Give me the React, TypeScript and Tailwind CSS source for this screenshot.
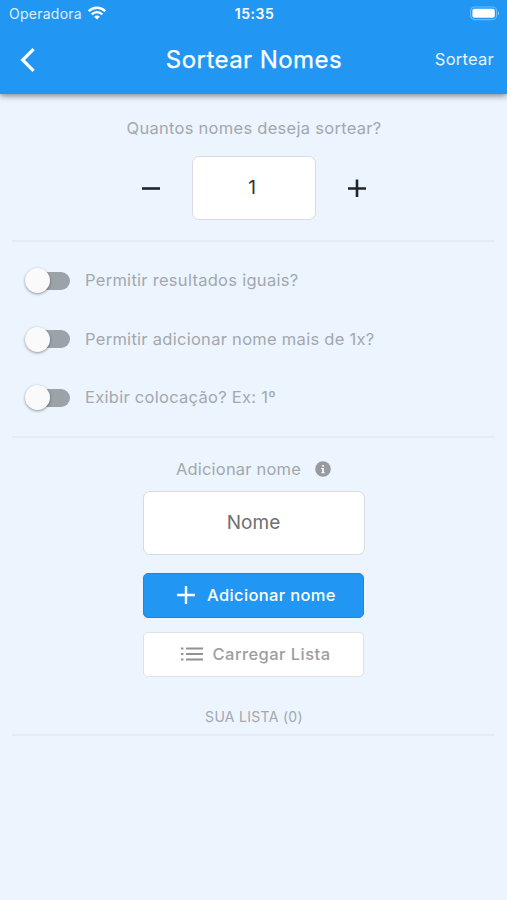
import { useState } from 'react';

const OPTIONS = [
  'Permitir resultados iguais?',
  'Permitir adicionar nome mais de 1x?',
  'Exibir colocação? Ex: 1º',
];

function StatusBar() {
  return (
    <div className="grid h-7 grid-cols-3 items-center pl-[9px] pr-[7px]">
      <div className="flex items-center gap-[6px] pb-[2px]">
        <span className="text-[14px] tracking-[0.25px] text-white/85">Operadora</span>
        <svg width="18" height="14" viewBox="0 0 18 14" fill="none" stroke="#fff">
          <path d="M0.8 5.2C5.4 0.6 12.6 0.6 17.2 5.2" strokeWidth="2.6" />
          <path d="M3.7 8.3C6.8 5.3 11.2 5.3 14.3 8.3" strokeWidth="2.3" />
          <path d="M9 13.6L6.1 10.7C7.8 9.1 10.2 9.1 11.9 10.7Z" fill="#fff" stroke="none" />
        </svg>
      </div>
      <span className="pb-[2px] text-center text-[14px] font-semibold tracking-[0.5px]">15:35</span>
      <svg width="31" height="15" viewBox="0 0 31 15" className="mb-[2px] justify-self-end">
        <rect x="1.6" y="1" width="26" height="12.6" rx="4" fill="none" stroke="#fff" strokeOpacity="0.35" strokeWidth="1.2" />
        <rect x="3.4" y="2.8" width="22.4" height="9" rx="2" fill="#fff" />
        <path d="M29 5.2c1.7.7 1.7 3.5 0 4.2z" fill="#fff" fillOpacity="0.4" />
      </svg>
    </div>
  );
}

function Toggle({ label }: { label: string }) {
  const [on, setOn] = useState(false);

  return (
    <div className="flex h-[58.5px] items-center gap-[15px]">
      <button
        role="switch"
        aria-checked={on}
        aria-label={label}
        onClick={() => setOn(!on)}
        className="flex h-[25px] w-[45px] items-center"
      >
        <span className={`ml-[3px] flex h-[18px] w-[42px] items-center rounded-full ${on ? 'justify-end bg-[#90caf9]' : 'bg-[#9ba2a8]'}`}>
          <span className="-ml-[3px] size-[25px] shrink-0 rounded-full bg-[#fafafa] shadow-[0_1px_3px_rgba(0,0,0,0.4)]" />
        </span>
      </button>
      <span className="text-[16.5px] tracking-[0.28px]">{label}</span>
    </div>
  );
}

export default function App() {
  const [count, setCount] = useState(1);

  return (
    <div className="min-h-[900px] w-full bg-[#ecf4fd] font-['Inter',sans-serif] text-[#a3a8ae]">
      {/* Header */}
      <header className="h-[94px] bg-[#2196f3] text-white shadow-[0_2px_6px_rgba(0,0,0,0.45)]">
        <StatusBar />
        <div className="grid h-16 grid-cols-[1fr_auto_1fr] items-center pl-5 pr-[13px]">
          <button aria-label="Voltar">
            <svg width="16" height="26" viewBox="0 0 16 26" fill="none" stroke="#fff" strokeWidth="3.2">
              <path d="M13.6 2.2L2.7 13L13.6 23.8" />
            </svg>
          </button>
          <h1 className="pr-[6px] text-[24px] tracking-[0.45px] [-webkit-text-stroke:0.25px_#fff]">Sortear Nomes</h1>
          <button className="justify-self-end pb-[2px] text-[16.5px] tracking-[0.25px] text-white/90">Sortear</button>
        </div>
      </header>

      <main className="px-3">
        {/* Quantity */}
        <section className="flex flex-col items-center border-b-2 border-[#e3ebf5] pb-5 pt-[22px]">
          <p className="pl-px text-[16.5px] leading-6 tracking-[0.28px]">Quantos nomes deseja sortear?</p>
          <div className="mt-4 flex items-center gap-8">
            <button aria-label="Diminuir" onClick={() => setCount(Math.max(1, count - 1))}>
              <svg width="18" height="18" viewBox="0 0 18 18" stroke="#20242a" strokeWidth="2.6">
                <path d="M0 9.5H18" />
              </svg>
            </button>
            <div className="flex h-16 w-[124px] items-center justify-center rounded-[7px] border border-[#d8dbe0] bg-white pr-[3px] text-[19px] text-[#333]">
              {count}
            </div>
            <button aria-label="Aumentar" onClick={() => setCount(count + 1)}>
              <svg width="18" height="18" viewBox="0 0 18 18" stroke="#20242a" strokeWidth="2.6">
                <path d="M0 9.5H18M9 0.5V18" />
              </svg>
            </button>
          </div>
        </section>

        {/* Options */}
        <section className="h-[196px] border-b-2 border-[#e3ebf5] pl-[13px] pt-[9.5px]">
          {OPTIONS.map((label) => (
            <Toggle key={label} label={label} />
          ))}
        </section>

        {/* Add name */}
        <section className="flex flex-col items-center border-b-2 border-[#e3ebf5] pb-[7px] pt-[19px]">
          <div className="flex h-6 items-center gap-[14px]">
            <span className="text-[16.5px] tracking-[0.2px]">Adicionar nome</span>
            <svg width="16" height="16" viewBox="0 0 16 16">
              <circle cx="8" cy="8" r="7.8" fill="#989a9d" />
              <path d="M7.1 3.9h1.9v1.9H7.1zM6.2 7h2.8v4.2h.9v1.1H6.2v-1.1h.9V8.1h-.9z" fill="#ecf4fd" />
            </svg>
          </div>
          <input
            placeholder="Nome"
            className="mt-[10px] h-16 w-[222px] rounded-[7px] border border-[#d8dbe0] bg-white pb-[2px] text-center text-[19px] text-[#333] outline-none placeholder:text-[#6f6f6f]"
          />
          <button className="mt-[18px] flex h-[45px] w-[221px] items-center justify-center gap-3 rounded-[5px] border border-[#1c87dd] bg-[#2196f3] pb-px pl-[6px] text-[16.5px] font-medium tracking-[0.35px] text-white">
            <svg width="18" height="18" viewBox="0 0 18 18" stroke="#fff" strokeWidth="2.4">
              <path d="M0 9H18M9 0V18" />
            </svg>
            Adicionar nome
          </button>
          <button className="mt-[14px] flex h-[45px] w-[221px] items-center justify-center gap-[10px] rounded-[5px] border border-[#dfe1e4] bg-white pb-px pl-[4px] text-[16.5px] font-medium tracking-[0.45px] text-[#9e9e9e]">
            <svg width="22" height="14" viewBox="0 0 22 14" stroke="#929292" strokeWidth="2.2">
              <path d="M0 1.5H2.4M5 1.5H22M0 7H2.4M5 7H22M0 12.5H2.4M5 12.5H22" />
            </svg>
            Carregar Lista
          </button>
          <p className="mt-[30px] pl-px text-[14px] leading-5 tracking-[0.3px]">SUA LISTA (0)</p>
        </section>
      </main>
    </div>
  );
}
